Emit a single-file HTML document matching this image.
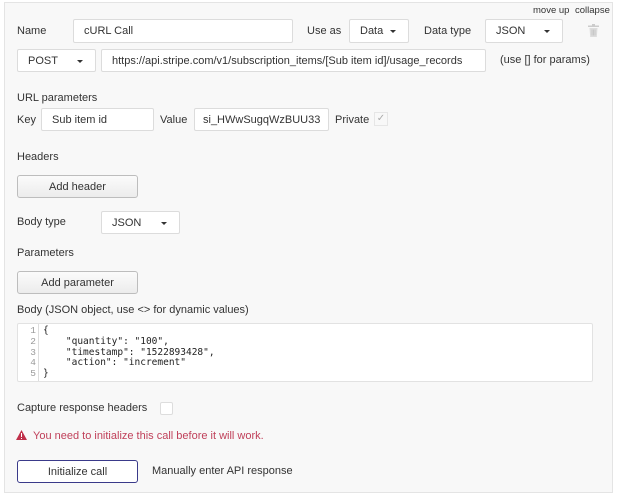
<!DOCTYPE html>
<html><head><style>
*{box-sizing:border-box;margin:0;padding:0}
body{width:618px;height:499px;background:#fff;font-family:"Liberation Sans",sans-serif;font-size:11px;color:#333;position:relative;overflow:hidden}
.panel{position:absolute;left:4px;top:2px;width:609px;height:491px;background:#f8f8f8;border:1px solid #e4e4e4}
.a{position:absolute;white-space:nowrap}
.in{position:absolute;background:#fff;border:1px solid #dcdcdc;border-radius:2px;padding-left:10px;display:flex;align-items:center;white-space:nowrap}
.sel::after{content:"";position:absolute;right:12px;top:50%;margin-top:-1px;border-left:3px solid transparent;border-right:3px solid transparent;border-top:3px solid #333}
.btn{position:absolute;background:linear-gradient(#fbfbfb,#ececec);border:1px solid #bdbdbd;border-radius:3px;display:flex;align-items:center;justify-content:center}
.lbl{transform:translateY(-50%)}
</style></head><body>
<div class="panel"></div>
<div class="a" style="left:533px;top:5px;font-size:9.5px">move up</div>
<div class="a" style="left:575px;top:5px;font-size:9.5px">collapse</div>

<div class="a lbl" style="left:17px;top:31px">Name</div>
<div class="in" style="left:73px;top:19px;width:220px;height:24px">cURL Call</div>
<div class="a lbl" style="left:307px;top:31px">Use as</div>
<div class="in sel" style="left:349px;top:19px;width:60px;height:24px">Data</div>
<div class="a lbl" style="left:424px;top:31px">Data type</div>
<div class="in sel" style="left:485px;top:19px;width:78px;height:24px">JSON</div>
<svg class="a" style="left:588px;top:24px" width="11" height="13" viewBox="0 0 11 13"><rect x="0" y="1.5" width="11" height="1.5" fill="#ccc"/><rect x="4" y="0" width="3" height="2" fill="#ccc"/><path d="M1.5 4h8l-.7 9h-6.6z" fill="#ddd"/><path d="M4 5.5v6M5.5 5.5v6M7 5.5v6" stroke="#bbb" stroke-width=".6"/></svg>

<div class="in sel" style="left:17px;top:49px;width:79px;height:23px">POST</div>
<div class="in" style="left:101px;top:49px;width:385px;height:23px">https://api.stripe.com/v1/subscription_items/[Sub item id]/usage_records</div>
<div class="a lbl" style="left:500px;top:60px">(use [] for params)</div>

<div class="a lbl" style="left:17px;top:98px">URL parameters</div>
<div class="a lbl" style="left:17px;top:120px">Key</div>
<div class="in" style="left:41px;top:108px;width:113px;height:23px">Sub item id</div>
<div class="a lbl" style="left:160px;top:120px">Value</div>
<div class="in" style="left:194px;top:108px;width:135px;height:23px;padding-left:8px">si_HWwSugqWzBUU33</div>
<div class="a lbl" style="left:335px;top:120px">Private</div>
<div class="a" style="left:374px;top:112px;width:14px;height:14px;border:1px solid #e6e6e6;background:#f8f8f8;color:#aaa;font-size:10px;line-height:12px;text-align:center">✓</div>

<div class="a lbl" style="left:17px;top:157px">Headers</div>
<div class="btn" style="left:17px;top:175px;width:121px;height:23px">Add header</div>
<div class="a lbl" style="left:17px;top:222px">Body type</div>
<div class="in sel" style="left:101px;top:211px;width:79px;height:23px">JSON</div>
<div class="a lbl" style="left:17px;top:253px">Parameters</div>
<div class="btn" style="left:17px;top:271px;width:121px;height:23px">Add parameter</div>
<div class="a lbl" style="left:17px;top:310px">Body (JSON object, use &lt;&gt; for dynamic values)</div>

<div class="a" style="left:17px;top:323px;width:576px;height:59px;background:#fff;border:1px solid #e2e2e2;border-radius:2px"></div>
<div class="a" style="left:17px;top:324px;width:22px;height:57px;border-right:1px solid #ddd"></div>
<div class="a" style="left:24px;top:326px;font-family:'Liberation Mono',monospace;font-size:9.5px;line-height:10.8px;color:#999;text-align:right;width:12px;white-space:normal">1<br>2<br>3<br>4<br>5</div>
<pre class="a" style="left:43px;top:326px;font-family:'DejaVu Sans Mono',monospace;font-size:9.5px;line-height:10.8px;color:#222;white-space:pre">{
    "quantity": "100",
    "timestamp": "1522893428",
    "action": "increment"
}</pre>

<div class="a lbl" style="left:17px;top:408px">Capture response headers</div>
<div class="a" style="left:160px;top:402px;width:13px;height:13px;background:#fff;border:1px solid #ddd;border-radius:2px"></div>
<svg class="a" style="left:16px;top:430px" width="11" height="10" viewBox="0 0 11 10"><path d="M5.5 0L11 10H0z" fill="#c0304a"/><rect x="5" y="3" width="1" height="4" fill="#fff"/><rect x="5" y="8" width="1" height="1" fill="#fff"/></svg>
<div class="a lbl" style="left:33px;top:436px;color:#c0405a">You need to initialize this call before it will work.</div>

<div class="btn" style="left:17px;top:460px;width:121px;height:23px;background:#fff;border:1px solid #3a3a8a;color:#333">Initialize call</div>
<div class="a lbl" style="left:152px;top:471px">Manually enter API response</div>
</body></html>
